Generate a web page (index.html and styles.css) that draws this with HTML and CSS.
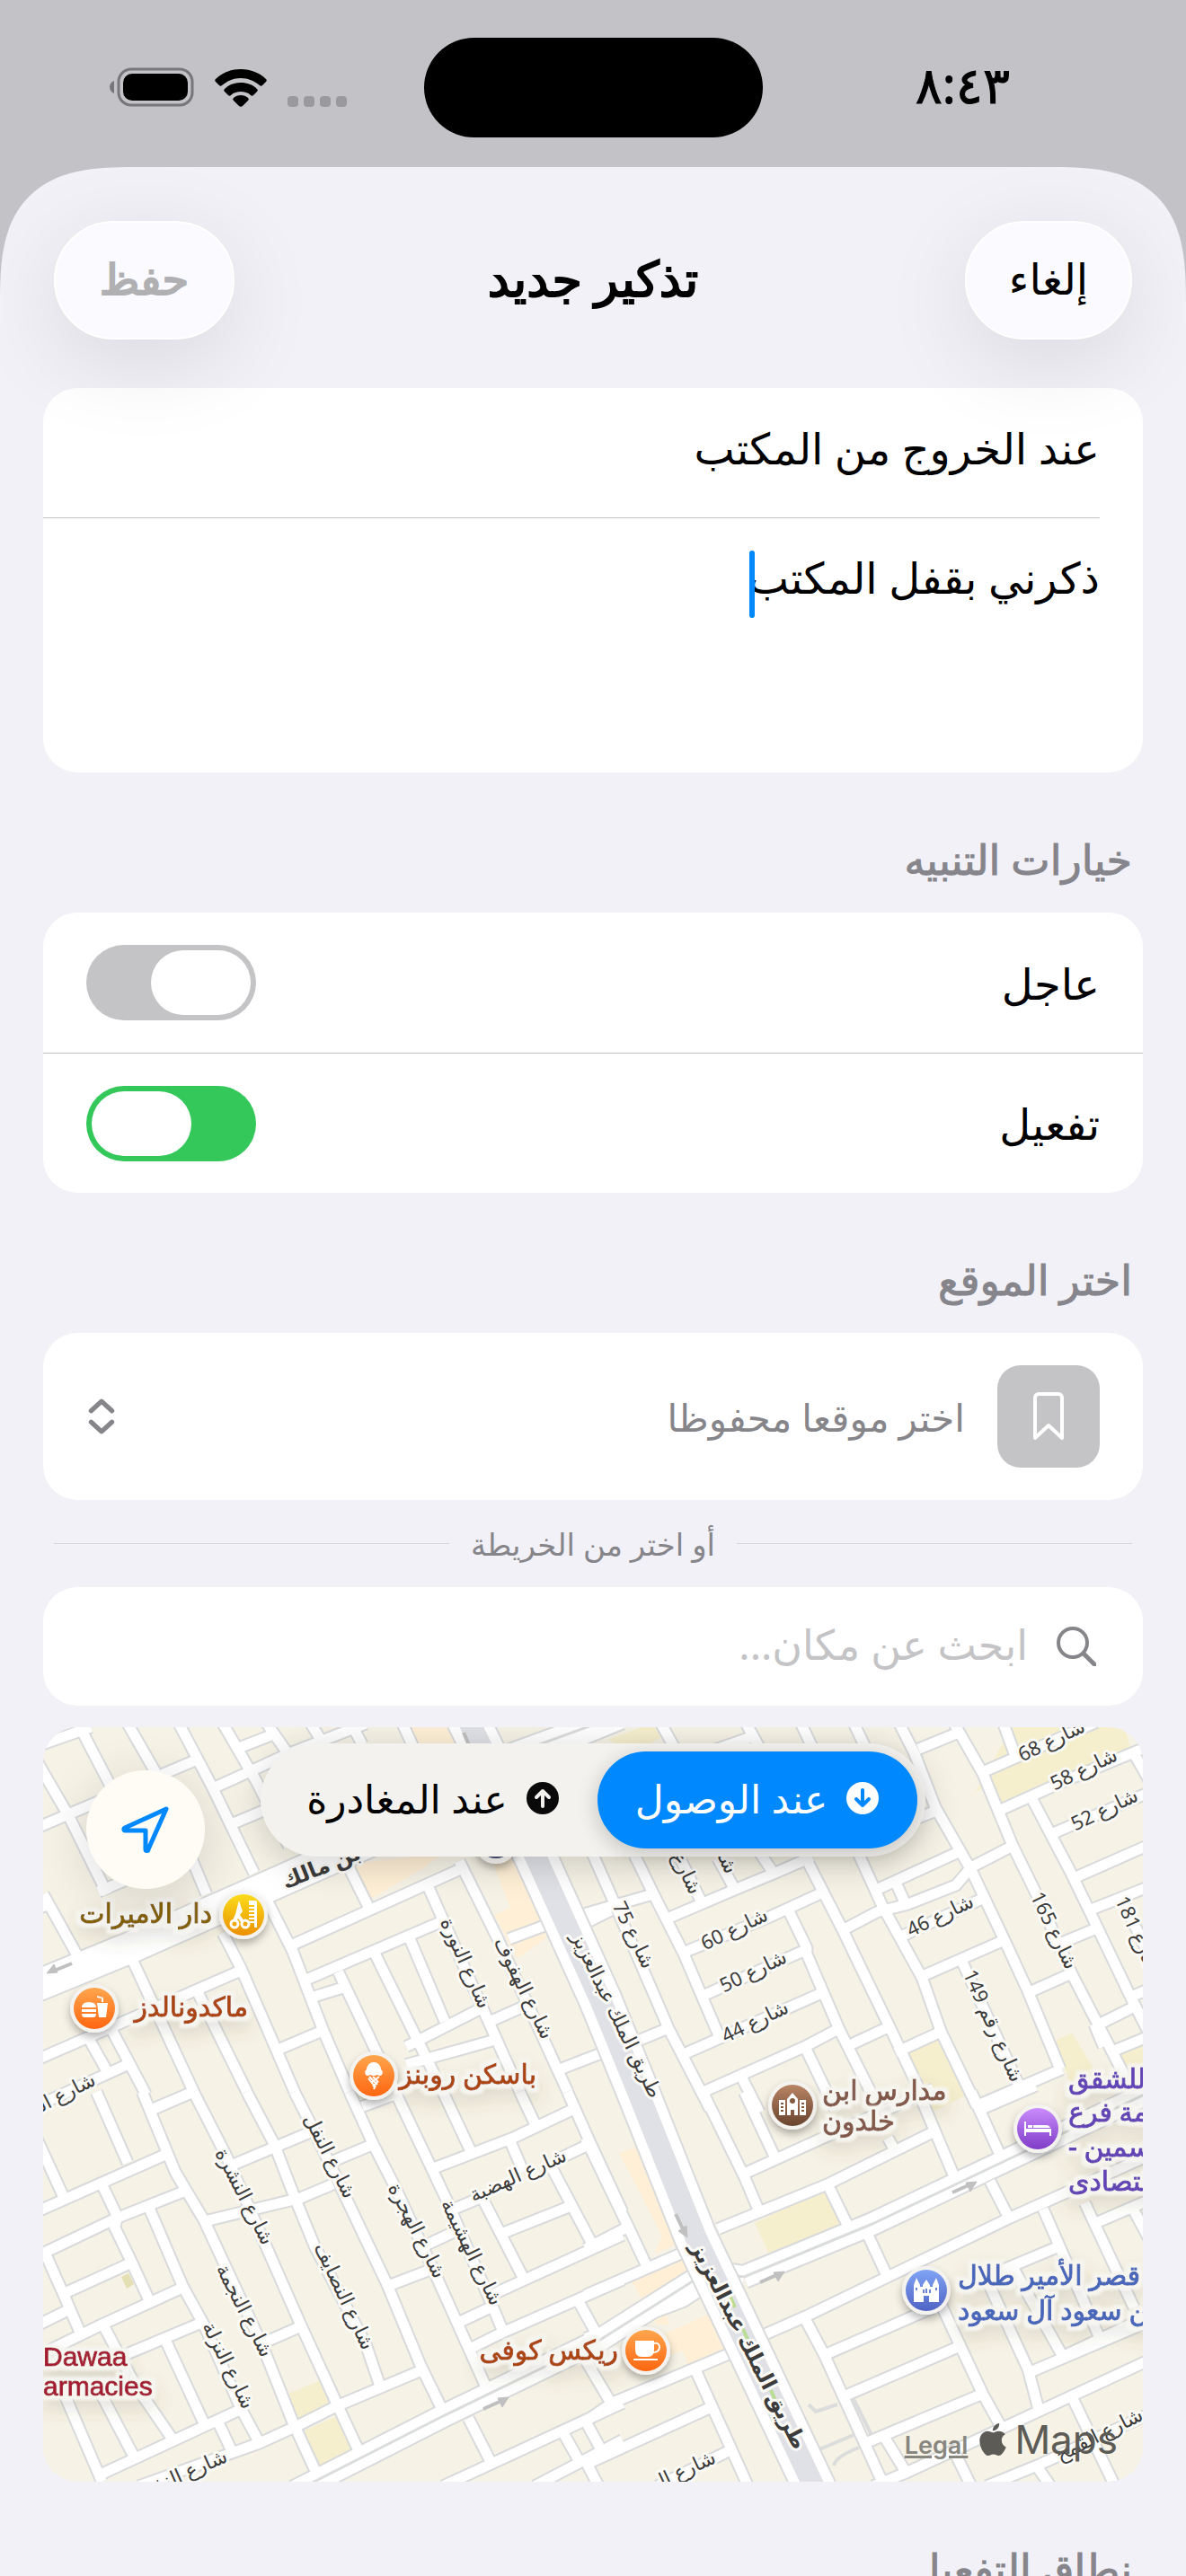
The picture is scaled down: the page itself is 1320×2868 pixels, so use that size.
FILE: index.html
```html
<!DOCTYPE html>
<html lang="ar" dir="rtl">
<head>
    <meta charset="UTF-8">
    <meta name="viewport" content="width=device-width, initial-scale=1.0">
    <title>تذكير جديد</title>
    <link rel="stylesheet" href="styles.css">
</head>
<body>
    <div class="status-bar">
        <span class="clock">٨:٤٣</span>
        <div class="island"></div>
        <div class="status-icons">
            <svg class="signal" viewBox="0 0 66 12"><g fill="#9a9a9e"><rect width="12" height="12" rx="4"/><rect x="18" width="12" height="12" rx="4"/><rect x="36" width="12" height="12" rx="4"/><rect x="54" width="12" height="12" rx="4"/></g></svg>
            <svg class="wifi" viewBox="0 0 58 42"><path d="M29 0C18 0 8 4 1 11c-1 1-1 2 0 3l4 4c1 1 2 1 3 0 6-5 13-8 21-8s15 3 21 8c1 1 2 1 3 0l4-4c1-1 1-2 0-3C50 4 40 0 29 0z"/><path d="M29 15c-7 0-13 2-18 7-1 1-1 2 0 3l4 4c1 1 2 1 3 0 3-3 7-4 11-4s8 1 11 4c1 1 2 1 3 0l4-4c1-1 1-2 0-3-5-5-11-7-18-7z"/><path d="M29 29c-3 0-6 1-8 3-1 1-1 2 0 3l6 6c1 1 3 1 4 0l6-6c1-1 1-2 0-3-2-2-5-3-8-3z"/></svg>
            <svg class="battery" viewBox="0 0 94 44"><rect x="10" y="2" width="82" height="40" rx="14" fill="none" stroke="#77777b" stroke-width="3"/><path d="M5 15v14c-3-1-5-4-5-7s2-6 5-7z" fill="#77777b"/><rect x="15" y="7" width="72" height="30" rx="10"/></svg>
        </div>
    </div>

    <main class="sheet">
        <header class="sheet-header">
            <button class="glass-btn" type="button">إلغاء</button>
            <h1>تذكير جديد</h1>
            <button class="glass-btn" type="button" disabled>حفظ</button>
        </header>

        <form class="form">
            <div class="card">
                <input class="title-input" type="text" aria-label="العنوان" value="عند الخروج من المكتب">
                <div class="note">
                    <textarea aria-label="الملاحظة">ذكرني بقفل المكتب</textarea>
                    <i class="caret"></i>
                </div>
            </div>

            <h2>خيارات التنبيه</h2>
            <div class="card">
                <label class="row">عاجل <input class="switch" type="checkbox"></label>
                <label class="row">تفعيل <input class="switch" type="checkbox" checked></label>
            </div>

            <h2>اختر الموقع</h2>
            <div class="card saved">
                <span class="saved-icon">
                    <svg viewBox="0 0 34 54"><path d="M2 6a4 4 0 0 1 4-4h22a4 4 0 0 1 4 4v45L17 37 2 51z" fill="none" stroke="#fff" stroke-width="4" stroke-linejoin="round"/></svg>
                </span>
                <select aria-label="اختر موقعا محفوظا">
                    <option>اختر موقعا محفوظا</option>
                </select>
                <svg class="chevrons" viewBox="0 0 28 38"><path d="M3 13L14 3l11 10M3 25l11 10 11-10" fill="none" stroke="#85858a" stroke-width="5" stroke-linecap="round" stroke-linejoin="round"/></svg>
            </div>

            <div class="divider"><span>أو اختر من الخريطة</span></div>

            <label class="card search">
                <svg viewBox="0 0 44 44"><circle cx="18" cy="18" r="16" fill="none" stroke="#85858a" stroke-width="4"/><path d="M30 30l12 12" stroke="#85858a" stroke-width="5" stroke-linecap="round"/></svg>
                <input type="search" aria-label="بحث" placeholder="ابحث عن مكان...">
            </label>

            <div class="map">
                <svg class="map-canvas" viewBox="0 0 1224 840" preserveAspectRatio="xMidYMid slice">
                    <defs>
                        <linearGradient id="orange" x2="0" y2="1"><stop stop-color="#ffa64d"/><stop offset="1" stop-color="#ff6610"/></linearGradient>
                        <linearGradient id="yellow" x2="0" y2="1"><stop stop-color="#fbdc1c"/><stop offset="1" stop-color="#ec9000"/></linearGradient>
                        <linearGradient id="brown" x2="0" y2="1"><stop stop-color="#b98465"/><stop offset="1" stop-color="#6a442f"/></linearGradient>
                        <linearGradient id="purple" x2="0" y2="1"><stop stop-color="#c98cfc"/><stop offset="1" stop-color="#803cc8"/></linearGradient>
                        <linearGradient id="blue" x2="0" y2="1"><stop stop-color="#80a4f6"/><stop offset="1" stop-color="#5064c4"/></linearGradient>
                        <filter id="lift" x="-50%" y="-50%" width="200%" height="200%"><feDropShadow dx="0" dy="5" stdDeviation="5" flood-opacity=".3"/></filter>
                        <filter id="halo" x="-20%" y="-60%" width="140%" height="240%">
                            <feMorphology in="SourceAlpha" operator="dilate" radius="4" result="fat"/>
                            <feGaussianBlur in="fat" stdDeviation="1" result="soft"/>
                            <feFlood flood-color="#f6f5f0"/>
                            <feComposite in2="soft" operator="in" result="plate"/>
                            <feGaussianBlur in="fat" stdDeviation="10" result="blur"/>
                            <feOffset in="blur" dy="10" result="drop"/>
                            <feFlood flood-color="#5a5032" flood-opacity=".16"/>
                            <feComposite in2="drop" operator="in" result="shade"/>
                            <feMerge><feMergeNode in="shade"/><feMergeNode in="plate"/><feMergeNode in="SourceGraphic"/></feMerge>
                        </filter>

                        <!-- side streets, one group per map tile -->
                        <g id="streets">
                            <g transform="translate(-8 -14) scale(.408 .333)">
                                <path d="M-20 115L150 42M-20 390L440 150M-20 660L45 630M170 592L340 505M485 245L690 130 900 30M560 108L650 65M530 368L700 280M0 1155L140 1080 560 855M0 1310L250 1170M300 1330L430 1260M690 775L1170 510M730 890L1110 690M740 950L845 910M660 1120L785 1055M1010 1110L1210 985M1010 1170L1260 1085M1240 1025L1360 960M1290 750L1400 700M1420 1190L1568 1120M1510 690L1568 655M1440 110L1600 30"/>
                                <path d="M115 30L200 230 250 340M250 30L325 190 465 600M390 30L480 240 595 530M-10 130L90 340 195 600M20 600L115 810M510 30L600 220 690 440M630 30L690 135M750 30L785 100M860 30L890 100M1000 30L1030 110M145 1085L195 1195M205 1050L300 1270M265 825L430 1260M440 925L575 1260M510 730L560 850 705 1260M630 620L700 790 785 1060 855 1260M825 860L980 1260M925 800L1110 1260M1020 750L1115 1025M1070 575L1320 1260M1155 490L1260 750 1450 1260M845 490L910 650"/>
                            </g>
                            <g transform="translate(612 -14) scale(.421 .333)">
                                <path d="M190 685L375 585 480 530 580 475M230 800L460 680 615 590M290 940L565 785M240 1135L615 925M290 1262L560 1110 650 1050M-20 665L160 600M110 1095L205 1045M660 720L750 660 830 635 960 570 1000 510 1115 435M750 585L965 460M860 345L920 315M1025 195L1330 25M860 115L970 58M1075 320L1250 220 1480 100M1210 400L1480 255M1265 550L1480 430M1310 655L1480 570M800 750L1030 615M860 880L1085 755M1150 930L1265 865M1235 765L1330 715M1410 950L1480 912M670 1110L780 1045M800 1130L920 1060M1010 1310L1240 1185M1330 1040L1425 980M1365 1130L1480 1070M270 140L430 70"/>
                                <path d="M-10 440L60 640 200 1050 310 1320M110 470L160 600 240 800 340 1095M180 30L215 110M230 480L290 635M330 480L375 585M440 460L480 535M405 30L440 110M555 460L660 720 790 1060 880 1300M515 650L565 780 565 800 650 1050 745 1290M700 460L765 640 870 880 920 1060 1015 1310M550 30L580 110M690 30L720 110M810 30L850 130 905 310 1000 520 1090 760 1150 925 1235 1185M955 30L1030 195 1110 440 1180 620 1265 865 1390 1170 1440 1290M1085 30L1120 150M1160 280L1260 520 1310 650 1420 940 1480 1090M970 810L1130 1250M1400 620L1480 830M1430 130L1480 240M800 560L825 630M560 1110L640 1320M390 1205L440 1330M1325 1035L1350 1110"/>
                            </g>
                            <g transform="translate(-8 406) scale(.408 .343)">
                                <path d="M0 390L180 295 360 200M0 535L220 410 410 320M75 655L260 555M0 760L85 710M0 860L180 755 410 630M250 850L450 750M180 1240L560 1030M280 1280L610 1140 720 1080 820 1020 1060 900M460 420L720 345 810 300M530 240L650 180 750 130M810 225L920 170M620 815L725 760M960 630L1070 580M1050 505L1140 455M1080 250L1300 150 1460 60M1130 385L1230 335M1430 215L1510 170M1270 460L1460 370M1250 655L1600 465M1150 750L1240 700M1190 830L1275 780 1600 610M1110 1280L1600 1010M1360 1280L1600 1130M320 55L430 0M890 48L980 8"/>
                                <path d="M-10 120L75 340M165 0L250 230M290 0L380 260 460 420 620 830 700 1070 770 1250M430 0L520 210 620 480 720 750 820 1010 890 1190M575 0L650 170 705 340 760 500 900 820 940 960M705 0L760 130 840 330 960 630 1050 890 1120 1060M855 0L920 170 980 310 1085 580 1240 990M980 0L1080 250 1120 350 1240 680 1275 780M1110 0L1185 190M1320 0L1360 100M1450 0L1510 160 1600 390M1290 150L1330 260M1400 230L1520 500M1220 350L1330 605M20 510L80 670 120 780M180 300L222 405 215 440 260 550 310 680M310 380L400 630 460 760 560 1030 610 1140M185 760L270 950 380 1140M355 810L460 1080M70 960L180 1265M160 940L270 1190M500 1080L540 1180M1180 1060L1240 1200M1440 1110L1485 1205M1500 1070L1550 1180M1500 1200L1535 1280M1480 680L1545 820"/>
                            </g>
                            <g transform="translate(612 406) scale(.421 .343)">
                                <path d="M-20 510L90 440M400 265L580 165 900 -10M330 445L620 300 900 130M1010 65L1170 -20M440 795L560 730 780 600 1100 410 1454 215M610 855L900 700M660 990L980 820M720 1140L1030 980M740 1280L830 1235 1480 865M1145 915L1480 740M1330 425L1480 345M1060 590L1235 500M1040 1280L1180 1210 1480 1040M-20 660L260 510M-20 800L240 680 290 640M-20 1070L50 1010 380 840M-20 1210L310 1025M170 1280L360 1165M1240 860L1480 720"/>
                                <path d="M-20 150L90 430 140 560M290 0L400 275 440 390M400 0L480 210M620 300L680 450M780 150L800 195M860 0L960 290M1000 0L1080 215M1050 290L1100 410M725 460L780 605M560 735L610 850 770 1280M920 690L1030 980 1080 1090M1045 620L1150 900 1180 1040M1110 570L1245 865M1190 380L1340 800M1300 360L1430 700M1430 385L1480 500M1270 1000L1380 1280M960 1180L1000 1280M1170 1210L1210 1280M770 1120L830 1240M270 900L410 1280M-20 870L50 1015"/>
                            </g>
                        </g>
                        <!-- two-lane streets -->
                        <g id="avenues">
                            <path d="M280 851L445 767 620 682 740 606 780 612"/>
                            <path d="M780 612L923 553 1066 485 1236 404"/>
                            <path d="M440 60L660 -20"/>
                        </g>
                        <path id="malik" d="M-12 290L98 245 222 190 330 142 470 80"/>
                        <path id="highway" d="M472-10L549 146 620 303 662 406 726 567 860 850"/>
                    </defs>

                    <rect width="1224" height="840" fill="#f6f2e6"/>
                    <g fill="#feefd6">
                        <path d="M404 0h60l14 40h-60zM345 152l100-12-20 16-62 36zM498 145h42l20 90-32 22-26-48 18-8z"/>
                        <path d="M641 474l20-7 52 105-32 14 8-20zM653 614l64-27 18 36-46 18 8 24h-14zM690 676l54-24 20 44-44 20-8-22-22 8z"/>
                    </g>
                    <g fill="#f5efce">
                        <path d="M628 14l54-20 10 14-30 20zM1078 0h125l8 24-120 60-15-30-38 18zM1048 56l90-42 20 24-90 48zM957 363l38-15 32 62-40 20zM1125 350l20-10 30 50-30 10zM1190 365l34-14v24l-26 14z"/>
                        <path d="M792 552l78-37 20 46-78 34zM271 743l38-16 14 30-40 14zM287 785l40-18 20 42-40 18z"/>
                    </g>
                    <path d="M87 612l8-4 6 12-8 5z" fill="#e5dfb4"/>

                    <use href="#streets" class="street casing"/>
                    <use href="#avenues" class="avenue casing"/>
                    <use href="#malik" class="malik casing"/>
                    <use href="#streets" class="street"/>
                    <use href="#avenues" class="avenue"/>
                    <use href="#avenues" class="median"/>
                    <use href="#malik" class="malik"/>
                    <use href="#highway" class="service casing"/>
                    <use href="#highway" class="service"/>
                    <use href="#highway" class="highway"/>
                    <path d="M764 632l6 14M779 670l8 18M810 738l6 14" stroke="#b9dd94" stroke-width="4"/>
                    <g class="lane">
                        <path d="M852 754l8 8 24-8M902 748l20 40M864 804l38-16M880 822q2-10 28-20"/>
                    </g>
                    <!-- one-way arrows -->
                    <g class="arrow">
                        <path d="M32 263L10 272"/><path class="head" d="M4 274l8-10 4 9z"/>
                        <path d="M490 759l20-9"/><path class="head" d="M518 746l-7 11-5-10z"/>
                        <path d="M1012 518l20-9"/><path class="head" d="M1039 506l-7 11-5-10z"/>
                        <path d="M798 618l20-9"/><path class="head" d="M825 606l-7 11-5-10z"/>
                        <path d="M704 542l9 19"/><path class="head" d="M717 568l-10-7 9-6z"/>
                        <path d="M468 6l6 14"/>
                    </g>

                    <g class="road-label">
                        <text transform="translate(469 263) rotate(66)">شارع النورة</text>
                        <text transform="translate(534 291) rotate(64)">شارع الهفوف</text>
                        <text transform="translate(637 321) rotate(64)">طريق الملك عبدالعزيز</text>
                        <text transform="translate(22 410) rotate(-27)">شارع الد</text>
                        <text transform="translate(318 478) rotate(63)">شارع النفل</text>
                        <text transform="translate(223 523) rotate(63)">شارع النشرة</text>
                        <text transform="translate(223 650) rotate(63)">شارع النجمة</text>
                        <text transform="translate(205 711) rotate(64)">شارع النزلة</text>
                        <text transform="translate(334 634) rotate(65)">شارع النصايف</text>
                        <text transform="translate(415 561) rotate(63)">شارع الهجرة</text>
                        <text transform="translate(476 585) rotate(64)">شارع الهشيمة</text>
                        <text transform="translate(529 500) rotate(-24)">شارع الهضبة</text>
                        <text transform="translate(165 829) rotate(-24)">شارع النذ</text>
                        <text transform="translate(770 226) rotate(-26)">شارع 60</text>
                        <text transform="translate(791 273) rotate(-26)">شارع 50</text>
                        <text transform="translate(793 329) rotate(-26)">شارع 44</text>
                        <text transform="translate(999 211) rotate(-26)">شارع 46</text>
                        <text transform="translate(1123 16) rotate(-26)">شارع 68</text>
                        <text transform="translate(1159 48) rotate(-26)">شارع 58</text>
                        <text transform="translate(1182 93) rotate(-26)">شارع 52</text>
                        <text transform="translate(656 232) rotate(64)">شارع 75</text>
                        <text transform="translate(1124 227) rotate(64)">شارع 165</text>
                        <text transform="translate(1217 232) rotate(66)">شارع 181</text>
                        <text transform="translate(1056 333) rotate(66)">شارع رقم 149</text>
                        <text transform="translate(715 163) rotate(64)">شارع</text>
                        <text transform="translate(755 140) rotate(64)">شارع</text>
                        <text transform="translate(713 829) rotate(-25)">شارع ال</text>
                        <text transform="translate(1176 789) rotate(-27)">شارع القمح</text>
                    </g>
                    <g class="road-label major">
                        <text transform="translate(310 157) rotate(-22)">بن مالك</text>
                        <text transform="translate(784 689) rotate(63)">طريق الملك عبدالعزيز</text>
                    </g>

                    <g class="pin">
                        <circle cx="223" cy="209" r="27"/><circle cx="223" cy="209" r="23" fill="url(#yellow)"/>
                        <g fill="none" stroke="#fff" stroke-width="3"><circle cx="213" cy="219" r="4"/><circle cx="225" cy="219" r="4"/></g>
                        <path d="M218 193l4 12-3 4 5 7-4 1-3-4-3 4-3-2 3-7z" fill="#fff"/>
                        <path d="M229 193h7q2 0 2 2v28h-3v-5h-6v-2h6v-2h-6v-2h6v-2h-6v-2h6v-2h-6v-2h6v-2h-6v-2h6v-2h-6z" fill="#fff"/>
                    </g>
                    <g class="pin">
                        <circle cx="57" cy="313" r="27"/><circle cx="57" cy="313" r="23" fill="url(#orange)"/>
                        <path d="M43 312q0-6 8-6t8 6zM43 314h16v3H43zM43 319h16q0 4-3 4H46q-3 0-3-4zM60 307h12l-2 16h-8zM65 306v-4l-5-1v-2l7 2v5z" fill="#fff"/>
                    </g>
                    <g class="pin">
                        <circle cx="368" cy="388" r="27"/><circle cx="368" cy="388" r="23" fill="url(#orange)"/>
                        <path d="M359 387q-2-4 1-6 1-8 8-8t8 8q3 2 1 6-2 2-5 0-4 2-8 0-3 2-5 0z" fill="#fff"/>
                        <path d="M363 389l9 9M367 389l6 6M362 391l8 10M374 389l-9 7M373 394l-6 6M370 399l-2 4" stroke="#fff" stroke-width="2" fill="none"/>
                    </g>
                    <g class="pin">
                        <circle cx="834" cy="421" r="27"/><circle cx="834" cy="421" r="23" fill="url(#brown)"/>
                        <path d="M819 415h7v17h-7zM842 415h7v17h-7zM828 432v-18l6-7 6 7v18h-4v-6h-4v6z" fill="#fff"/>
                        <path d="M821 419h3M821 423h3M821 427h3M844 419h3M844 423h3M844 427h3" stroke="#83593f" stroke-width="2"/><circle cx="834" cy="416" r="3" fill="#83593f"/>
                    </g>
                    <g class="pin">
                        <circle cx="1107" cy="447" r="27"/><circle cx="1107" cy="447" r="23" fill="url(#purple)"/>
                        <path d="M1092 439h2v8h28v8h-2v-4h-26v4h-2zM1096 443h5v3h-5zM1102 443h14q4 0 5 3h-19z" fill="#fff"/>
                    </g>
                    <g class="pin">
                        <circle cx="983" cy="627" r="27"/><circle cx="983" cy="627" r="23" fill="url(#blue)"/>
                        <path d="M969 640v-19l3-8 4 8v2h3v-2l4-6 4 6v2h3v-2l4-8 3 8v19h-11v-7h-6v7z" fill="#fff"/>
                        <path d="M980 626v4M983 625v5M987 626v4M972 624v3M994 624v3" stroke="#6a84dc" stroke-width="2"/>
                    </g>
                    <g class="pin">
                        <circle cx="671" cy="694" r="27"/><circle cx="671" cy="694" r="23" fill="url(#orange)"/>
                        <path d="M659 683h21v10q0 8-7 8h-7q-7 0-7-8zM657 703h27v2h-27z" fill="#fff"/><path d="M680 686q6-1 6 4 0 6-7 6" fill="none" stroke="#fff" stroke-width="2"/>
                    </g>
                    <g class="pin"><circle cx="504" cy="128" r="24"/><circle cx="504" cy="126" r="20" fill="#43496b"/></g>

                    <g class="place">
                        <text x="188" y="218" class="beauty">دار الاميرات</text>
                        <text x="228" y="322" class="food">ماكدونالدز</text>
                        <text x="549" y="397" class="food">باسكن روبنز</text>
                        <text x="640" y="704" class="food">ريكس كوفى</text>
                        <g class="clipped">
                            <text x="867" y="415" class="school">مدارس ابن</text>
                            <text x="867" y="449" class="school">خلدون</text>
                            <text x="1141" y="402" class="hotel">للشقق</text>
                            <text x="1141" y="439" class="hotel">ـمة فرع</text>
                            <text x="1141" y="478" class="hotel">الياسمين -</text>
                            <text x="1141" y="516" class="hotel">اقتصادى</text>
                            <text x="1018" y="621" class="landmark">قصر الأمير طلال</text>
                            <text x="1018" y="660" class="landmark">بن سعود آل سعود</text>
                        </g>
                        <g class="latin">
                            <text x="0" y="711" class="pharmacy">Dawaa</text>
                            <text x="0" y="744" class="pharmacy">armacies</text>
                        </g>
                    </g>
                </svg>

                <div class="map-mode">
                    <button class="mode active" type="button">
                        <svg viewBox="0 0 38 38"><circle cx="19" cy="19" r="18" fill="#fff"/><path d="M19 10v17M12 20l7 7 7-7" fill="none" stroke="#0088ff" stroke-width="4" stroke-linecap="round" stroke-linejoin="round"/></svg>
                        عند الوصول
                    </button>
                    <button class="mode" type="button">
                        <svg viewBox="0 0 38 38"><circle cx="19" cy="19" r="18" fill="#0a0a0a"/><path d="M19 28V11M12 18l7-7 7 7" fill="none" stroke="#f2f1ee" stroke-width="4" stroke-linecap="round" stroke-linejoin="round"/></svg>
                        عند المغادرة
                    </button>
                </div>
                <button class="locate" type="button" aria-label="موقعي">
                    <svg viewBox="0 0 54 54"><path d="M50 4L4 25c-2 1-1 3 0 3h23v21c0 2 3 2 3 0z" fill="none" stroke="#0088ff" stroke-width="5" stroke-linejoin="round"/></svg>
                </button>
                <div class="attribution">
                    <a href="#legal">Legal</a>
                    <svg viewBox="0 0 24 24"><path d="M12.152 6.896c-.948 0-2.415-1.078-3.96-1.04-2.04.027-3.91 1.183-4.961 3.014-2.117 3.675-.546 9.103 1.519 12.09 1.013 1.454 2.208 3.09 3.792 3.039 1.52-.065 2.09-.987 3.935-.987 1.831 0 2.35.987 3.96.948 1.637-.026 2.676-1.48 3.676-2.948 1.156-1.688 1.636-3.325 1.662-3.415-.039-.013-3.182-1.221-3.22-4.857-.026-3.04 2.48-4.494 2.597-4.559-1.429-2.09-3.623-2.324-4.39-2.376-2-.156-3.675 1.09-4.61 1.09zM15.53 3.83c.843-1.012 1.4-2.427 1.245-3.83-1.207.052-2.662.805-3.532 1.818-.78.896-1.454 2.338-1.273 3.714 1.338.104 2.715-.688 3.559-1.701"/></svg>
                    <span>Maps</span>
                </div>
            </div>

            <h2>نطاق التفعيل</h2>
        </form>
    </main>
</body>
</html>
```
FILE: styles.css
```css
* {
    box-sizing: border-box;
}

body {
    margin: 0;
    display: flex;
    flex-direction: column;
    height: 100vh;
    overflow: hidden;
    background-color: #c3c2c7;
    color: #000;
    font-family: "Noto Sans", "DejaVu Sans", sans-serif;
    font-size: 48px;
}

button,
input,
select,
textarea {
    font: inherit;
    color: inherit;
    border: 0;
    padding: 0;
    margin: 0;
    background: none;
    outline: none;
}

svg {
    display: block;
    flex: none;
}

/* status bar */
.status-bar {
    flex: none;
    display: grid;
    grid-template-columns: 1fr 377px 1fr;
    align-items: center;
    height: 186px;
    padding: 8px 122px 0;
}

.clock {
    padding-right: 74px;
    padding-bottom: 8px;
    font-size: 56px;
    -webkit-text-stroke: 1px;
}

.island {
    height: 111px;
    border-radius: 56px;
    background: #000;
}

.status-icons {
    display: flex;
    justify-content: flex-end;
    align-items: flex-end;
    gap: 23px;
}

.signal {
    width: 66px;
    height: 12px;
}

.wifi {
    width: 58px;
    height: 42px;
}

.battery {
    width: 94px;
    height: 44px;
}

/* sheet */
.sheet {
    flex: 1;
    min-height: 0;
    overflow: hidden;
    background: #f2f1f7;
    border-radius: 116px 116px 0 0;
}

@supports (corner-shape: superellipse(1.5)) {
    .sheet {
        border-radius: 150px 150px 0 0;
        corner-shape: superellipse(1.5);
    }
}

.sheet-header {
    display: grid;
    grid-template-columns: 1fr auto 1fr;
    align-items: center;
    height: 246px;
    padding: 60px 60px 54px;
}

.sheet-header h1 {
    margin: 0;
    padding-bottom: 6px;
    font-size: 54px;
    font-weight: 400;
    -webkit-text-stroke: 2px;
}

.glass-btn {
    height: 132px;
    min-width: 186px;
    padding: 0 44px 6px;
    border: 2px solid #fff;
    border-radius: 66px;
    background: #fafaff;
    box-shadow: 0 24px 100px rgba(0, 0, 0, 0.1);
    justify-self: start;
}

.glass-btn:last-child {
    justify-self: end;
    min-width: 201px;
    color: #b0b0b2;
    -webkit-text-stroke: 2px;
}

.form {
    padding: 0 48px;
}

.form h2 {
    margin: 0;
    height: 156px;
    padding: 60px 12px 0;
    line-height: 72px;
    font-size: 46px;
    font-weight: 400;
    color: #85858b;
    -webkit-text-stroke: 1px;
}

.card {
    background: #fff;
    border-radius: 38px;
    overflow: hidden;
}

.title-input {
    display: block;
    width: calc(100% - 48px);
    height: 145px;
    margin-right: 48px;
    padding-bottom: 12px;
    border-bottom: 1px solid #c4c4c6;
}

.note {
    position: relative;
    height: 283px;
    padding: 30px 48px;
}

.note textarea {
    display: block;
    width: 100%;
    height: 100%;
    resize: none;
    line-height: 72px;
    overflow: hidden;
}

.caret {
    position: absolute;
    top: 36px;
    right: 432px;
    width: 6px;
    height: 75px;
    border-radius: 3px;
    background: #0088ff;
}

.row {
    display: flex;
    align-items: center;
    justify-content: space-between;
    height: 156px;
    padding: 0 48px;
}

.row + .row {
    border-top: 1px solid #c4c4c6;
}

.switch {
    appearance: none;
    display: flex;
    width: 189px;
    height: 84px;
    padding: 6px;
    border-radius: 42px;
    background: #c4c4c6;
}

.switch::before {
    content: "";
    width: 111px;
    height: 72px;
    border-radius: 36px;
    background: #fff;
}

.switch:checked {
    background: #34c75a;
    justify-content: flex-end;
}

.saved {
    display: flex;
    align-items: center;
    gap: 36px;
    height: 186px;
    padding: 0 48px;
    color: #85858a;
}

.saved-icon {
    display: grid;
    place-items: center;
    width: 114px;
    height: 114px;
    border-radius: 26px;
    background: #c4c4c6;
}

.saved-icon svg {
    width: 34px;
    height: 54px;
}

.saved select {
    appearance: none;
    flex: 1;
    min-width: 0;
    height: 100%;
    font-size: 42px;
}

.chevrons {
    width: 34px;
    height: 40px;
}

.divider {
    display: flex;
    align-items: center;
    gap: 24px;
    height: 97px;
    padding: 0 12px;
    font-size: 34px;
    color: #85858a;
}

.divider::before,
.divider::after {
    content: "";
    flex: 1;
    height: 1px;
    background: #d8d8dc;
}

.search {
    display: flex;
    align-items: center;
    gap: 32px;
    height: 132px;
    padding: 0 52px;
}

.search svg {
    width: 44px;
    height: 44px;
}

.search input {
    flex: 1;
    min-width: 0;
    height: 100%;
    padding-bottom: 6px;
    font-size: 46px;
}

.search input::placeholder {
    color: #c4c4c6;
    opacity: 1;
}

/* map */
.map {
    position: relative;
    height: 840px;
    margin-top: 24px;
    border-radius: 38px;
    overflow: hidden;
}

.map-canvas {
    width: 100%;
    height: 100%;
}

#streets path {
    vector-effect: non-scaling-stroke;
}

.street,
.avenue,
.malik,
.service,
.highway,
.median {
    fill: none;
    stroke: #fff;
    stroke-linejoin: round;
}

.street {
    stroke-width: 11px;
}

.avenue {
    stroke-width: 24px;
}

.malik {
    stroke-width: 34px;
}

.service {
    stroke-width: 46px;
}

.street.casing {
    stroke-width: 15px;
}

.avenue.casing {
    stroke-width: 28px;
}

.malik.casing {
    stroke-width: 38px;
}

.service.casing {
    stroke-width: 50px;
}

.casing {
    stroke: #d8dadb;
}

.median {
    stroke: #dbdddd;
    stroke-width: 3px;
}

.highway {
    stroke: #e0e1e6;
    stroke-width: 24px;
}

.lane,
.arrow {
    fill: none;
    stroke: #dbdddd;
    stroke-width: 4px;
}

.arrow {
    stroke: #c0c0c0;
}

.arrow .head {
    fill: #c0c0c0;
    stroke-width: 1px;
}

.road-label text {
    font-size: 22px;
    fill: #3c3c3c;
    text-anchor: middle;
    dominant-baseline: middle;
    paint-order: stroke;
    stroke: #fbfaf6;
    stroke-width: 6px;
    stroke-linejoin: round;
}

.road-label.major text {
    font-size: 24px;
    font-weight: 700;
}

.pin > circle:first-child {
    fill: #f4f3f0;
    filter: url(#lift);
}

.place text {
    font-size: 30px;
    stroke-width: 1px;
    filter: url(#halo);
}

.place .beauty {
    fill: #866200;
    stroke: #866200;
}

.place .food {
    fill: #ac4510;
    stroke: #ac4510;
}

.place .school {
    fill: #83594a;
    stroke: #83594a;
}

.place .hotel {
    fill: #6344b6;
    stroke: #6344b6;
}

.place .landmark {
    fill: #4867ba;
    stroke: #4867ba;
}

.place .pharmacy {
    fill: #a51d33;
    stroke: #a51d33;
}

.clipped text {
    text-anchor: end;
}

.place .latin text {
    direction: ltr;
    font-family: "Liberation Sans", sans-serif;
}

.map-mode {
    position: absolute;
    top: 18px;
    left: 50%;
    transform: translateX(-50%);
    display: flex;
    width: 740px;
    height: 126px;
    padding: 9px;
    border-radius: 63px;
    background: #f3f2ef;
    box-shadow: 0 8px 40px rgba(0, 0, 0, 0.18);
}

.mode {
    flex: 1;
    display: flex;
    align-items: center;
    justify-content: center;
    gap: 20px;
    padding-bottom: 4px;
    border-radius: 54px;
    font-size: 44px;
}

.mode svg {
    width: 38px;
    height: 38px;
}

.mode.active {
    flex: 0 0 356px;
    background: #0088ff;
    color: #fff;
    box-shadow: 0 6px 24px rgba(0, 0, 0, 0.2);
}

.locate {
    position: absolute;
    top: 48px;
    left: 48px;
    display: grid;
    place-items: center;
    width: 132px;
    height: 132px;
    border-radius: 50%;
    background: #fefcf5;
    box-shadow: 0 12px 60px rgba(0, 0, 0, 0.14);
}

.locate svg {
    width: 54px;
    height: 54px;
}

.attribution {
    position: absolute;
    right: 28px;
    bottom: 20px;
    display: flex;
    align-items: baseline;
    gap: 6px;
    direction: ltr;
    font-family: Inter, "Liberation Sans", sans-serif;
    font-size: 44px;
    color: #5c5b56;
}

.attribution a {
    margin-right: 4px;
    font-size: 27px;
    font-weight: 600;
    color: #88877f;
    text-decoration-thickness: 3px;
}

.attribution svg {
    width: 36px;
    height: 36px;
    align-self: center;
    fill: #5c5b56;
}
```
